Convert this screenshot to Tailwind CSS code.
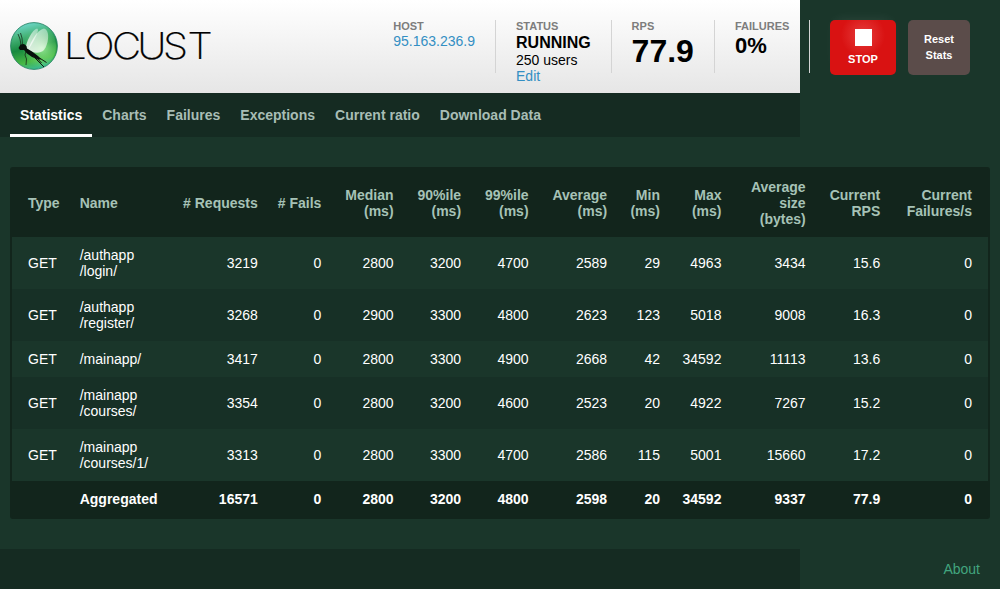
<!DOCTYPE html>
<html lang="en">
<head>
<meta charset="utf-8">
<title>Locust</title>
<script src="https://cdn.jsdelivr.net/npm/@tailwindcss/browser@4"></script>
</head>
<body class="h-[589px] overflow-hidden bg-[#1a362a] font-['Liberation_Sans',Arial,sans-serif] text-sm leading-4 text-white">
<header class="h-[93px] w-[800px] bg-linear-to-b from-white to-[#e6e6e6]">
  <div class="flex w-[1000px] justify-between pt-5 pr-[30px] pl-2.5 text-black">
    <svg class="mt-0.5 shrink-0" width="204" height="50" viewBox="0 0 204 50">
      <defs>
        <linearGradient id="ball" x1="0.35" y1="0" x2="0.6" y2="1">
          <stop offset="0" stop-color="#6fd8cc"/><stop offset=".25" stop-color="#48b57c"/><stop offset=".52" stop-color="#17893f"/><stop offset=".8" stop-color="#48b844"/><stop offset="1" stop-color="#38bb9c"/>
        </linearGradient>
        <radialGradient id="glow" cx=".68" cy=".55" r=".45"><stop offset="0" stop-color="#a0ee9c" stop-opacity=".9"/><stop offset="1" stop-color="#7ee07c" stop-opacity="0"/></radialGradient>
        <linearGradient id="wing" x1="1" y1="0" x2="0" y2="1"><stop offset="0" stop-color="#fff" stop-opacity=".4"/><stop offset="1" stop-color="#fff" stop-opacity=".85"/></linearGradient>
      </defs>
      <circle cx="24" cy="24" r="23.4" fill="url(#ball)" stroke="#1a7a5c" stroke-width=".8"/>
      <circle cx="24" cy="24" r="22" fill="url(#glow)"/>
      <path d="M15.5 27C16 20 22 8 27 6.5C30 7 26 16 18 28Z" fill="url(#wing)"/>
      <path d="M18 28C21 19 27 8 34 6.5C40 8 39 21 34 28C30 32 23 31 18 28Z" fill="url(#wing)"/>
      <path d="M8.5 26L10.5 22.5L14 22L16.5 24L17 26.5L22 29.5L28 34L31 37.5L28 37.5L22 35L17 31.5L14 28L10 28Z" fill="#080f0b"/>
      <path d="M11 23L10 17L8 12M12.5 23L12 16L10.5 11M16 29L15 33L16.5 37L16 43" fill="none" stroke="#10180f" stroke-width=".7"/>
      <path d="M23 34L29 40L34 45M28 35L36.500 40.500M26 35L31.500 41" fill="none" stroke="#10180f" stroke-width="1"/>
      <text transform="scale(1.1 1)" y="36.7" x="49.1 67.5 92.7 115.7 139.1 161.300" font-family="Inter" font-weight="200" font-size="36.5" fill="#000" stroke="#000" stroke-width=".25">LOCUST</text>
    </svg>
    <div class="flex">
      <div class="h-[53px] border-r border-[#d4d4d4] pr-5">
        <div class="text-[11px] leading-[13px] font-bold text-[#7d7d7d]">HOST</div>
        <div class="text-[#338fc3]">95.163.236.9</div>
      </div>
      <div class="h-[53px] w-[115.6px] border-r border-[#d4d4d4] pl-5">
        <div class="text-[11px] leading-[13px] font-bold text-[#7d7d7d]">STATUS</div>
        <div class="text-base leading-[19px] font-bold">RUNNING</div>
        <div>250 users</div>
        <div class="text-[#338fc3]">Edit</div>
      </div>
      <div class="h-[53px] w-[103.4px] border-r border-[#d4d4d4] pl-5">
        <div class="text-[11px] leading-[13px] font-bold text-[#7d7d7d]">RPS</div>
        <div class="text-[32px] leading-9 font-bold">77.9</div>
      </div>
      <div class="h-[53px] w-[95px] border-r border-[#d4d4d4] pl-5">
        <div class="text-[11px] leading-[13px] font-bold text-[#7d7d7d]">FAILURES</div>
        <div class="text-[22px] leading-[26px] font-bold">0%</div>
      </div>
      <div class="ml-5 flex h-[55px] w-[66px] flex-col items-center rounded-[5px] bg-[#d91212] bg-[radial-gradient(circle_at_33px_15px,#e63c3c_0,#d91212_22px)] pt-[9px] text-[11px] font-bold text-white shadow-[0_-5px_12px_-6px_#ffffff18]">
        <div class="h-[17px] w-[17px] bg-white"></div>
        <div class="mt-[5px]">STOP</div>
      </div>
      <div class="ml-3 flex h-[55px] w-[62px] flex-col items-center justify-center rounded-[5px] bg-[#5b4c4a] pb-px text-[11px] font-bold text-white">
        <div>Reset</div><div>Stats</div>
      </div>
    </div>
  </div>
</header>
<nav class="flex h-11 w-[800px] bg-[#152b22] pl-2.5 font-bold text-[#a8bdb5]">
  <div class="border-b-3 border-white px-2.5 pt-3.5 text-white">Statistics</div>
  <div class="px-2.5 pt-3.5">Charts</div>
  <div class="px-2.5 pt-3.5">Failures</div>
  <div class="px-2.5 pt-3.5">Exceptions</div>
  <div class="px-2.5 pt-3.5">Current ratio</div>
  <div class="px-2.5 pt-3.5">Download Data</div>
</nav>
<main class="mx-2.5 mt-[30px] overflow-hidden rounded-[3px] border-2 border-[#12251c] bg-[#12251c]">
  <table class="w-[976px] table-fixed border-collapse whitespace-nowrap text-right [&_td]:p-2.5 [&_th]:p-2.5 [&_tr>:first-child]:pl-4 [&_tr>:last-child]:pr-4 [&_tr>:nth-child(-n+2)]:text-left">
    <colgroup><col class="w-[57.7px]"><col class="w-[96px]"><col class="w-[102.1px]"><col class="w-[63.4px]"><col class="w-[72.4px]"><col class="w-[67.5px]"><col class="w-[67.5px]"><col class="w-[78.6px]"><col class="w-[52.8px]"><col class="w-[61.5px]"><col class="w-[84.2px]"><col class="w-[74.6px]"><col></colgroup>
    <thead class="text-[#a6c2b6]"><tr class="h-[68px]"><th>Type</th><th>Name</th><th># Requests</th><th># Fails</th><th>Median<br>(ms)</th><th>90%ile<br>(ms)</th><th>99%ile<br>(ms)</th><th>Average<br>(ms)</th><th>Min<br>(ms)</th><th>Max<br>(ms)</th><th>Average<br>size<br>(bytes)</th><th>Current<br>RPS</th><th>Current<br>Failures/s</th></tr></thead>
    <tbody>
      <tr class="bg-[#1a362a]"><td>GET</td><td>/authapp<br>/login/</td><td>3219</td><td>0</td><td>2800</td><td>3200</td><td>4700</td><td>2589</td><td>29</td><td>4963</td><td>3434</td><td>15.6</td><td>0</td></tr>
      <tr class="bg-[#173026]"><td>GET</td><td>/authapp<br>/register/</td><td>3268</td><td>0</td><td>2900</td><td>3300</td><td>4800</td><td>2623</td><td>123</td><td>5018</td><td>9008</td><td>16.3</td><td>0</td></tr>
      <tr class="bg-[#1a362a]"><td>GET</td><td>/mainapp/</td><td>3417</td><td>0</td><td>2800</td><td>3300</td><td>4900</td><td>2668</td><td>42</td><td>34592</td><td>11113</td><td>13.6</td><td>0</td></tr>
      <tr class="bg-[#173026]"><td>GET</td><td>/mainapp<br>/courses/</td><td>3354</td><td>0</td><td>2800</td><td>3200</td><td>4600</td><td>2523</td><td>20</td><td>4922</td><td>7267</td><td>15.2</td><td>0</td></tr>
      <tr class="bg-[#1a362a]"><td>GET</td><td>/mainapp<br>/courses/1/</td><td>3313</td><td>0</td><td>2800</td><td>3300</td><td>4700</td><td>2586</td><td>115</td><td>5001</td><td>15660</td><td>17.2</td><td>0</td></tr>
      <tr class="font-bold"><td></td><td>Aggregated</td><td>16571</td><td>0</td><td>2800</td><td>3200</td><td>4800</td><td>2598</td><td>20</td><td>34592</td><td>9337</td><td>77.9</td><td>0</td></tr>
    </tbody>
  </table>
</main>
<footer class="mt-[30px] h-10 w-[800px] bg-[#152b22]">
  <div class="w-[980px] pt-3 text-right text-[#42a57f]">About</div>
</footer>
</body>
</html>
